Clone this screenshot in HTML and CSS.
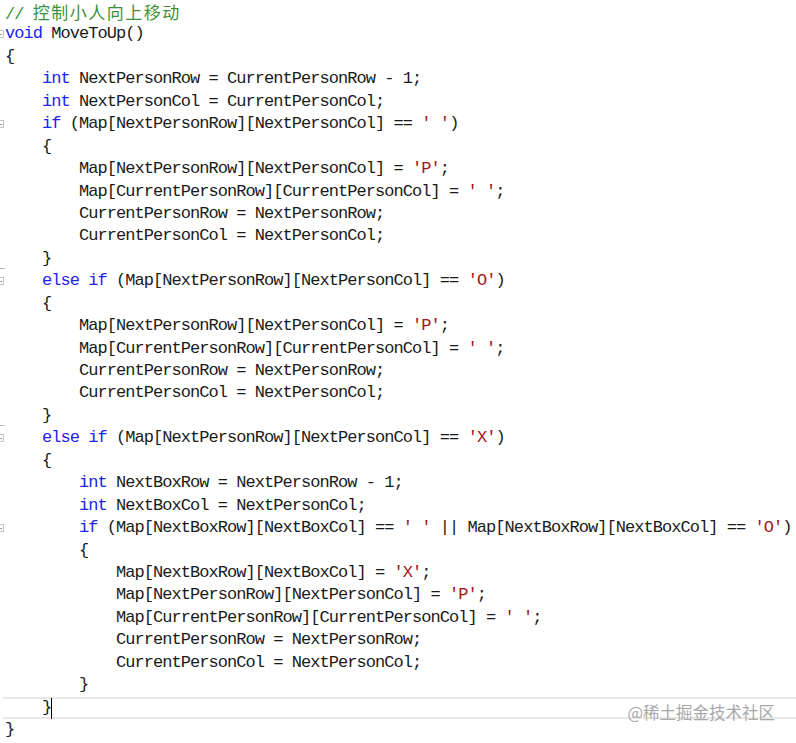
FILE: index.html
```html
<!DOCTYPE html>
<html lang="zh-CN">
<head>
<meta charset="utf-8">
<title>MoveToUp</title>
<link rel="stylesheet" href="styles.css">
</head>
<body>
<div class="editor">
<div class="ln"><span class="cm">// <span class="cjk">控制小人向上移动</span></span></div>
<div class="ln fold"><span class="kw">void</span> MoveToUp()</div>
<div class="ln">{</div>
<div class="ln">    <span class="kw">int</span> NextPersonRow = CurrentPersonRow - 1;</div>
<div class="ln">    <span class="kw">int</span> NextPersonCol = CurrentPersonCol;</div>
<div class="ln fold">    <span class="kw">if</span> (Map[NextPersonRow][NextPersonCol] == <span class="ch">' '</span>)</div>
<div class="ln">    {</div>
<div class="ln">        Map[NextPersonRow][NextPersonCol] = <span class="ch">'P'</span>;</div>
<div class="ln">        Map[CurrentPersonRow][CurrentPersonCol] = <span class="ch">' '</span>;</div>
<div class="ln">        CurrentPersonRow = NextPersonRow;</div>
<div class="ln">        CurrentPersonCol = NextPersonCol;</div>
<div class="ln tick">    }</div>
<div class="ln fold">    <span class="kw">else</span> <span class="kw">if</span> (Map[NextPersonRow][NextPersonCol] == <span class="ch">'O'</span>)</div>
<div class="ln">    {</div>
<div class="ln">        Map[NextPersonRow][NextPersonCol] = <span class="ch">'P'</span>;</div>
<div class="ln">        Map[CurrentPersonRow][CurrentPersonCol] = <span class="ch">' '</span>;</div>
<div class="ln">        CurrentPersonRow = NextPersonRow;</div>
<div class="ln">        CurrentPersonCol = NextPersonCol;</div>
<div class="ln tick">    }</div>
<div class="ln fold">    <span class="kw">else</span> <span class="kw">if</span> (Map[NextPersonRow][NextPersonCol] == <span class="ch">'X'</span>)</div>
<div class="ln">    {</div>
<div class="ln">        <span class="kw">int</span> NextBoxRow = NextPersonRow - 1;</div>
<div class="ln">        <span class="kw">int</span> NextBoxCol = NextPersonCol;</div>
<div class="ln fold">        <span class="kw">if</span> (Map[NextBoxRow][NextBoxCol] == <span class="ch">' '</span> || Map[NextBoxRow][NextBoxCol] == <span class="ch">'O'</span>)</div>
<div class="ln">        {</div>
<div class="ln">            Map[NextBoxRow][NextBoxCol] = <span class="ch">'X'</span>;</div>
<div class="ln">            Map[NextPersonRow][NextPersonCol] = <span class="ch">'P'</span>;</div>
<div class="ln">            Map[CurrentPersonRow][CurrentPersonCol] = <span class="ch">' '</span>;</div>
<div class="ln">            CurrentPersonRow = NextPersonRow;</div>
<div class="ln">            CurrentPersonCol = NextPersonCol;</div>
<div class="ln">        }</div>
<div class="ln cur">    }<span class="caret"></span></div>
<div class="ln">}</div>
<div class="wm">@稀土掘金技术社区</div>
</div>
</body>
</html>
```

FILE: styles.css
```css
html, body {
  margin: 0;
  padding: 0;
  background: #ffffff;
}

.editor {
  position: relative;
  display: flex;
  flex-direction: column;
  height: 743px;
  box-sizing: border-box;
  padding: 1px 0 0 5px;
  overflow: hidden;
  font-family: "Liberation Mono", "DejaVu Sans Mono", monospace;
  font-size: 17px;
  letter-spacing: -0.95px;
  color: #1a1a1a;
}

.ln {
  position: relative;
  flex: 0 0 22.45px;
  height: 22.45px;
  line-height: 22.45px;
  white-space: pre;
}

.kw { color: #2222f0; }
.ch { color: #a31515; }
.cm { color: #3a923a; }

.cjk {
  font-family: "Noto Sans CJK SC", sans-serif;
  font-size: 17px;
  letter-spacing: 1.5px;
  line-height: 22.45px;
}

.fold::before {
  content: "";
  position: absolute;
  left: -9px;
  top: 7px;
  width: 8px;
  height: 8px;
  box-sizing: border-box;
  border: 1px solid #c4c4c4;
  background: linear-gradient(#9a9a9a, #9a9a9a) center / 4px 1px no-repeat;
}

.tick::after {
  content: "";
  position: absolute;
  left: -5px;
  bottom: 1px;
  width: 5px;
  height: 1px;
  background: #b8b8b8;
}

.cur {
  margin-left: -2px;
  padding-left: 2px;
  box-shadow: inset 0 2px 0 #e8e8e8, inset 0 -2px 0 #e8e8e8;
}

.caret {
  display: inline-block;
  width: 1px;
  height: 21px;
  margin-top: 1px;
  vertical-align: top;
  background: #000000;
}

.wm {
  position: absolute;
  right: 21px;
  top: 701px;
  font-family: "Noto Sans CJK SC", sans-serif;
  font-size: 16.5px;
  letter-spacing: 0;
  line-height: 22px;
  color: #a8a8a8;
}
```
